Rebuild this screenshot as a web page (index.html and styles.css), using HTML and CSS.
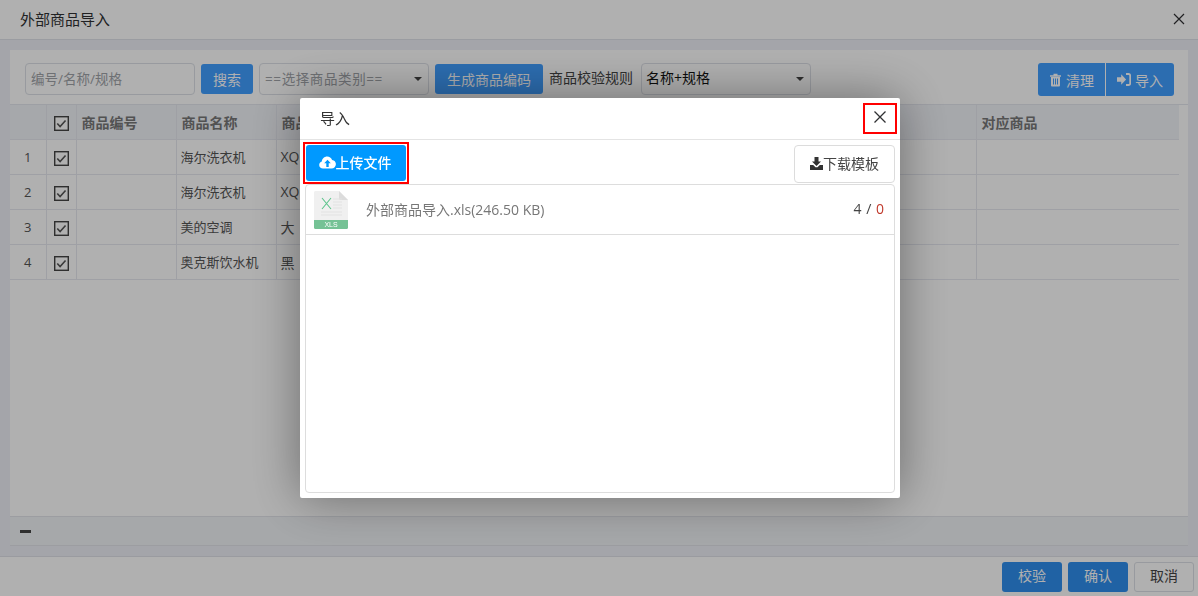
FILE: index.html
```html
<!DOCTYPE html>
<html lang="zh-CN">
<head>
    <meta charset="UTF-8">
    <title>外部商品导入</title>
    <link rel="stylesheet" href="styles.css">
</head>
<body>
    <svg class="defs" width="0" height="0">
        <symbol id="checked" viewBox="0 0 16 16">
            <rect x="0.75" y="0.75" width="14.500" height="14.500" fill="#fff" stroke="#444" stroke-width="1.500"/>
            <path d="M3.500 8l3 3.200 5.800-6.400" fill="none" stroke="#555" stroke-width="1.700"/>
        </symbol>
    </svg>

    <div class="page">
        <div class="page-header">
            <span>外部商品导入</span>
            <svg class="close-icon" width="12" height="12" viewBox="0 0 12 12"><path d="M1 1l10 10M11 1L1 11" stroke="#303133" stroke-width="1.200"/></svg>
        </div>

        <div class="page-body">
            <div class="panel">
                <div class="toolbar">
                    <input class="text-input" type="text" placeholder="编号/名称/规格">
                    <button class="btn btn-search">搜索</button>
                    <div class="select select-gray"><span>==选择商品类别==</span><i class="caret"></i></div>
                    <button class="btn btn-code">生成商品编码</button>
                    <span class="rule-label">商品校验规则</span>
                    <div class="select select-rule"><span>名称+规格</span><i class="caret"></i></div>
                    <div class="btn-group">
                        <button class="btn btn-clean">
                            <svg width="13" height="14" viewBox="0 0 13 14"><path d="M4.500 1.500h4M1 3h11" stroke="#fff" stroke-width="1.500" fill="none"/><path d="M2 4h9v8.200c0 .8-.5 1.300-1.300 1.300H3.300c-.8 0-1.300-.5-1.300-1.300z" fill="#fff"/><path d="M4.500 5.500v6M6.500 5.500v6M8.500 5.500v6" stroke="#409eff" stroke-width="1"/></svg>
                            清理
                        </button>
                        <button class="btn btn-import">
                            <svg width="14" height="13" viewBox="0 0 14 13"><path d="M0 4.200h4.200V1.300l4.900 5.200-4.900 5.200V8.800H0z" fill="#fff"/><path d="M9 1h2.600c1 0 1.600.7 1.600 1.600v7.800c0 .9-.6 1.600-1.600 1.600H9" fill="none" stroke="#fff" stroke-width="1.800"/></svg>
                            导入
                        </button>
                    </div>
                </div>

                <table class="goods-table">
                    <colgroup>
                        <col class="col-num"><col class="col-check"><col class="col-100"><col class="col-100"><col class="col-100"><col class="col-hidden"><col>
                    </colgroup>
                    <thead>
                        <tr>
                            <th></th>
                            <th class="center"><svg class="check"><use href="#checked"/></svg></th>
                            <th>商品编号</th>
                            <th>商品名称</th>
                            <th>商品规格</th>
                            <th></th>
                            <th>对应商品</th>
                        </tr>
                    </thead>
                    <tbody>
                        <tr>
                            <td class="center">1</td>
                            <td class="center"><svg class="check"><use href="#checked"/></svg></td>
                            <td></td><td>海尔洗衣机</td><td class="model">XQG70</td><td></td><td></td>
                        </tr>
                        <tr>
                            <td class="center">2</td>
                            <td class="center"><svg class="check"><use href="#checked"/></svg></td>
                            <td></td><td>海尔洗衣机</td><td class="model">XQG80</td><td></td><td></td>
                        </tr>
                        <tr>
                            <td class="center">3</td>
                            <td class="center"><svg class="check"><use href="#checked"/></svg></td>
                            <td></td><td>美的空调</td><td class="model">大</td><td></td><td></td>
                        </tr>
                        <tr>
                            <td class="center">4</td>
                            <td class="center"><svg class="check"><use href="#checked"/></svg></td>
                            <td></td><td>奥克斯饮水机</td><td class="model">黑</td><td></td><td></td>
                        </tr>
                    </tbody>
                </table>

                <div class="panel-fill"></div>
                <div class="panel-footer"><i class="dash"></i></div>
            </div>
        </div>

        <div class="page-footer">
            <button class="btn btn-foot">校验</button>
            <button class="btn btn-foot">确认</button>
            <button class="btn btn-foot btn-cancel">取消</button>
        </div>
    </div>

    <div class="overlay">
        <div class="modal">
            <div class="modal-title">
                <span class="modal-name">导入</span>
                <span class="close-mark">
                    <svg width="14" height="14" viewBox="0 0 14 14"><path d="M1.500 1.500l11 11M12.500 1.500l-11 11" stroke="#303133" stroke-width="1.300"/></svg>
                </span>
            </div>
            <div class="modal-tools">
                <span class="upload-mark">
                    <button class="btn-upload">
                        <svg width="17" height="13" viewBox="0 0 17 13"><path d="M4 12.600c-2.200 0-3.800-1.600-3.800-3.600 0-1.700 1.100-3 2.600-3.400C3 2.900 5.300.6 8.200.6c2.200 0 4.100 1.300 4.900 3.300 2.300.2 3.800 2 3.800 4.200 0 2.500-1.900 4.500-4.300 4.500z" fill="#fff"/><path d="M8.500 3.800l3.300 3.500H9.700v3.600H7.300V7.300H5.200z" fill="#0099ff"/></svg>上传文件
                    </button>
                </span>
                <button class="btn-download">
                    <svg width="13" height="13" viewBox="0 0 13 13"><path d="M4.500 0h4v4.500H11L6.500 9 2 4.500h2.500z" fill="#333"/><path d="M0 8h3.200l2.300 2.300h2L9.800 8H13v5H0z" fill="#333"/></svg>下载模板
                </button>
            </div>
            <div class="file-box">
                <div class="file-row">
                    <svg class="file-icon" width="34" height="38" viewBox="0 0 34 38">
                        <path d="M0 1.500C0 .6.600 0 1.500 0H25l9 9v27.500c0 .9-.6 1.500-1.500 1.500h-31C.6 38 0 37.400 0 36.500z" fill="#f0f0f0"/>
                        <path d="M25 0l9 9h-7.500c-.9 0-1.500-.6-1.500-1.500z" fill="#dcdcdc"/>
                        <path d="M8 7l9 11M17 7L8 18" stroke="#5cc48c" stroke-width="1.100"/>
                        <path d="M19 8h9M19 11h9M19 14h9M19 17h9M7 21h21M7 24h21" stroke="#e2e2e2" stroke-width="1"/>
                        <path d="M0 29h34v7.500c0 .9-.6 1.500-1.500 1.500h-31C.6 38 0 37.400 0 36.500z" fill="#75c295"/>
                        <text x="17" y="36.300" class="xls-text">XLS</text>
                    </svg>
                    <span class="file-name">外部商品导入.xls(246.50 KB)</span>
                    <span class="file-count">4 / <em>0</em></span>
                </div>
            </div>
        </div>
    </div>
</body>
</html>
```
FILE: styles.css
```css
* {
    box-sizing: border-box;
}
html, body {
    margin: 0;
    padding: 0;
    height: 100%;
    overflow: hidden;
}
body {
    font-family: "Open Sans", "Noto Sans CJK SC", sans-serif;
    font-size: 13px;
    color: #333;
    background: #fff;
}
button {
    font-family: inherit;
    cursor: pointer;
}
.defs {
    position: absolute;
}

/* page under the dialog */
.page {
    display: flex;
    flex-direction: column;
    height: 596px;
}
.page-header {
    display: flex;
    justify-content: space-between;
    align-items: center;
    height: 40px;
    padding: 0 13px 2px 20px;
    border-bottom: 1px solid #e0e2ea;
    font-size: 15px;
    color: #303133;
}
.page-body {
    flex: 1;
    display: flex;
    padding: 10px;
    background: #eef0f6;
}
.panel {
    flex: 1;
    display: flex;
    flex-direction: column;
    background: #fff;
}
.toolbar {
    display: flex;
    align-items: center;
    height: 55px;
    padding: 3px 4px 0 15px;
    border-bottom: 1px solid #e4e6ee;
}
.text-input {
    width: 170px;
    height: 32px;
    padding: 0 5px;
    border: 1px solid #dcdfe6;
    border-radius: 4px;
    outline: none;
    font-family: inherit;
    font-size: 13.5px;
}
.text-input::placeholder {
    color: #a0a3a8;
}
.btn {
    height: 30px;
    border: none;
    border-radius: 3px;
    background: #409eff;
    color: #fff;
    font-size: 14px;
    padding: 0;
}
.btn-search {
    width: 52px;
    margin: 0 6px;
}
.btn-code {
    width: 108px;
    margin-left: 6px;
}
.select {
    position: relative;
    display: flex;
    align-items: center;
    width: 170px;
    height: 32px;
    padding: 0 0 2px 5px;
    border: 1px solid #dcdfe6;
    border-radius: 4px;
    font-size: 13.5px;
}
.select-gray {
    color: #a0a3a8;
    letter-spacing: 0.6px;
}
.select-rule {
    color: #111;
    margin-left: 8px;
    padding-left: 4px;
    padding-bottom: 3px;
    font-size: 14px;
}
.caret {
    position: absolute;
    right: 6px;
    top: 13px;
    border: 4px solid transparent;
    border-top: 4px solid #444;
    border-bottom: none;
}
.rule-label {
    margin: -3px 0 0 6px;
    color: #444;
    font-size: 14px;
}
.btn-group {
    display: flex;
    gap: 1px;
    margin: 2px 10px 0 auto;
}
.btn-group .btn {
    display: flex;
    align-items: center;
    justify-content: center;
    gap: 4px;
    height: 33px;
}
.btn-clean {
    width: 67px;
    border-radius: 3px 0 0 3px;
}
.btn-import {
    width: 68px;
    border-radius: 0 3px 3px 0;
}

/* table */
.goods-table {
    width: 1169px;
    table-layout: fixed;
    border-collapse: collapse;
}
.col-num { width: 36px; }
.col-check { width: 30px; }
.col-100 { width: 100px; }
.col-hidden { width: 600px; }
.goods-table th, .goods-table td {
    height: 35px;
    padding: 0 4px;
    border: 1px solid #e6e8f0;
    border-top: none;
    text-align: left;
    white-space: nowrap;
    overflow: hidden;
    font-size: 13px;
    color: #555;
}
.goods-table th {
    height: 34px;
    padding: 1px 0 0 5px;
    background: #f1f3f8;
    color: #777;
    font-size: 14px;
    font-weight: 700;
}
.goods-table th:first-child, .goods-table td:first-child {
    border-left: none;
}
.goods-table th:last-child, .goods-table td:last-child {
    border-right: none;
}
.goods-table .center {
    padding: 0;
    text-align: center;
}
.goods-table .model {
    font-size: 14px;
}
.check {
    display: block;
    width: 15px;
    height: 15px;
    margin: 3px auto 0;
}
.panel-fill {
    flex: 1;
}
.panel-footer {
    display: flex;
    align-items: center;
    height: 30px;
    padding-left: 10px;
    background: #f1f3f6;
    border-top: 1px solid #e2e4ea;
    border-bottom: 1px solid #e2e4ea;
}
.dash {
    width: 11px;
    height: 3px;
    margin-top: 1px;
    background: #444;
}
.page-footer {
    display: flex;
    justify-content: flex-end;
    align-items: center;
    gap: 6px;
    height: 40px;
    padding-right: 4px;
    border-top: 1px solid #dfe1e8;
}
.btn-foot {
    width: 60px;
    padding-bottom: 3px;
    background: #2f8fee;
}
.btn-cancel {
    background: #fff;
    border: 1px solid #dcdfe6;
    color: #444;
}

/* dialog */
.overlay {
    position: fixed;
    inset: 0;
    display: flex;
    align-items: center;
    justify-content: center;
    padding-left: 2px;
    background: rgba(0, 0, 0, 0.31);
}
.modal {
    display: flex;
    flex-direction: column;
    width: 600px;
    height: 400px;
    padding-bottom: 5px;
    border-radius: 2px;
    background: #fff;
    box-shadow: 0 0 50px rgba(0, 0, 0, 0.4);
}
.modal-title {
    display: flex;
    justify-content: space-between;
    align-items: center;
    height: 42px;
    padding: 0 3px 0 20px;
    border-bottom: 1px solid #e4e4e4;
    color: #333;
}
.modal-name {
    font-size: 15px;
    margin-top: -2px;
}
.close-mark {
    display: flex;
    align-items: center;
    justify-content: center;
    width: 34px;
    height: 31px;
    border: 2px solid #f00;
}
.close-mark svg {
    margin-bottom: 3px;
}
.modal-tools {
    display: flex;
    justify-content: space-between;
    align-items: flex-end;
    height: 44px;
    padding: 0 5px 0 3px;
}
.upload-mark {
    display: block;
    padding: 1px;
    border: 2px solid #f00;
    height: 42px;
    width: 106px;
}
.btn-upload {
    display: flex;
    align-items: center;
    justify-content: center;
    width: 100%;
    height: 100%;
    padding: 0 2px 2px 0;
    border: none;
    border-radius: 3px;
    background: #0099ff;
    color: #fff;
    font-size: 14px;
    font-weight: 500;
}
.btn-download {
    display: flex;
    align-items: center;
    justify-content: center;
    width: 101px;
    height: 38px;
    margin-bottom: 1px;
    padding: 0 0 2px;
    border: 1px solid #dcdcdc;
    border-radius: 4px;
    background: #fff;
    color: #444;
    font-size: 14px;
}
.file-box {
    flex: 1;
    margin: 0 5px;
    border: 1px solid #ddd;
    border-radius: 4px;
}
.file-row {
    display: flex;
    align-items: center;
    height: 50px;
    padding: 0 10px 0 8px;
    border-bottom: 1px solid #ddd;
}
.file-icon {
    margin-top: 1px;
}
.xls-text {
    font-family: "Liberation Sans", sans-serif;
    font-size: 7px;
    fill: #fff;
    text-anchor: middle;
}
.file-name {
    margin-left: 18px;
    margin-top: -2px;
    color: #777;
    font-size: 14px;
}
.file-count {
    margin-left: auto;
    margin-top: -2px;
    font-size: 14px;
    word-spacing: 1px;
    color: #444;
}
.file-count em {
    font-style: normal;
    color: #c0392b;
}
```
